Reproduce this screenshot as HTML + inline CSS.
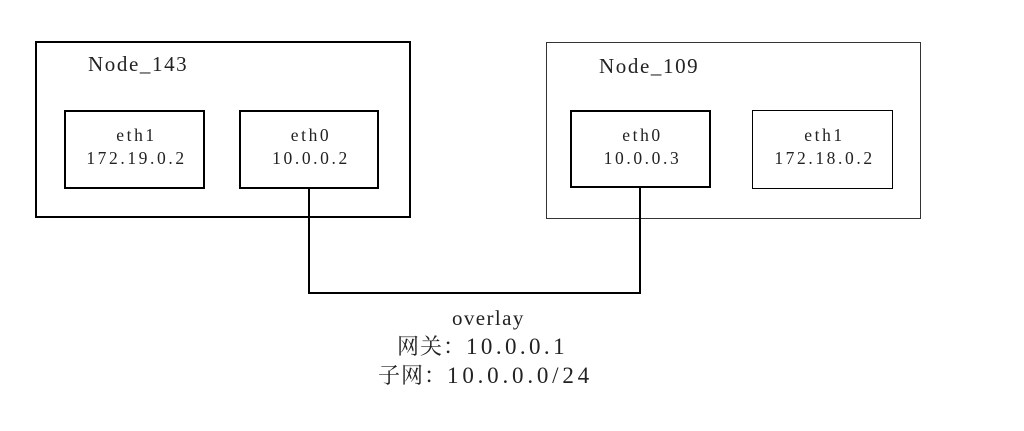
<!DOCTYPE html>
<html><head><style>
body{margin:0;width:1024px;height:431px;background:#fff;position:relative;overflow:hidden;font-family:"Liberation Serif","Noto Serif CJK SC",serif;color:#222}
.b{position:absolute;box-sizing:border-box;border:2px solid #000}
.t{position:absolute;white-space:nowrap}
.c{text-align:center;font-size:17.5px;line-height:23px;letter-spacing:2.6px}
</style></head><body>
<div class="b" style="left:35px;top:41px;width:376px;height:177px"></div>
<div class="b" style="left:546px;top:42px;width:375px;height:177px;border:1px solid #333"></div>
<div class="b" style="left:64px;top:110px;width:141px;height:79px"></div>
<div class="b" style="left:239px;top:110px;width:140px;height:79px"></div>
<div class="b" style="left:570px;top:110px;width:141px;height:78px"></div>
<div class="b" style="left:752px;top:110px;width:141px;height:79px;border-width:1px"></div>
<svg style="position:absolute;left:0;top:0" width="1024" height="431"><polyline points="309,188 309,293 640,293 640,187" fill="none" stroke="#000" stroke-width="2"/></svg>
<div class="t" style="left:88px;top:52px;font-size:21px;letter-spacing:1.6px">Node_143</div>
<div class="t" style="left:599px;top:54px;font-size:21px;letter-spacing:1.6px">Node_109</div>
<div class="t c" style="left:66px;top:124px;width:141px">eth1<br>172.19.0.2</div>
<div class="t c" style="left:241px;top:124px;width:140px">eth0<br>10.0.0.2</div>
<div class="t c" style="left:572px;top:124px;width:141px">eth0<br>10.0.0.3</div>
<div class="t c" style="left:754px;top:124px;width:141px">eth1<br>172.18.0.2</div>
<div class="t" style="left:452px;top:304px;font-size:21px;letter-spacing:1.4px;line-height:29px">overlay</div>
<div class="t" style="left:397px;top:332px;font-size:22px;line-height:29px"><span style="letter-spacing:1px">网关：</span><span style="font-size:23px;letter-spacing:3.4px">10.0.0.1</span></div>
<div class="t" style="left:378px;top:361px;font-size:22px;line-height:29px"><span style="letter-spacing:1px">子网：</span><span style="font-size:23px;letter-spacing:3.8px">10.0.0.0/24</span></div>
</body></html>
